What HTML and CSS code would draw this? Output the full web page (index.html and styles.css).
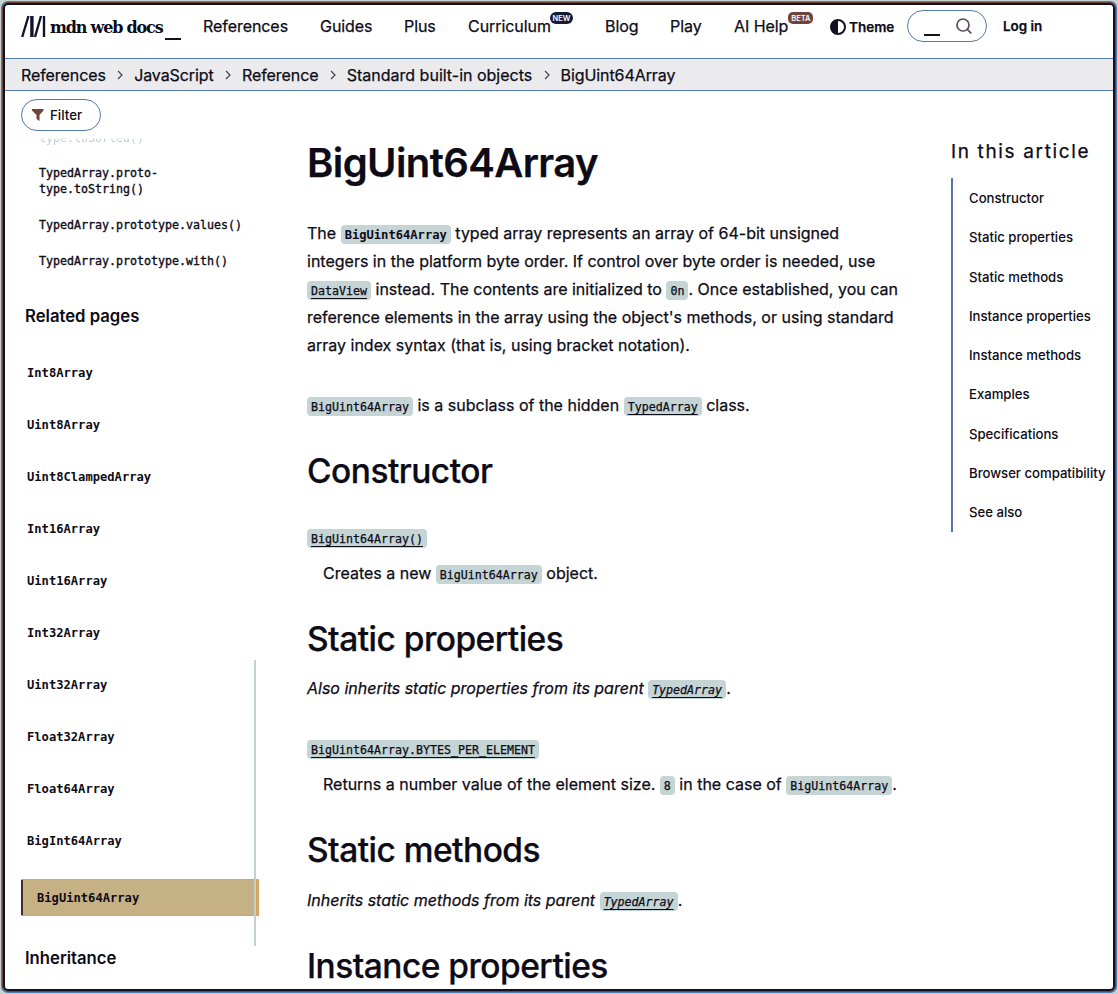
FILE: index.html
```html
<!DOCTYPE html>
<html lang="en">
<head>
<meta charset="utf-8">
<title>BigUint64Array - MDN Web Docs</title>
<link rel="stylesheet" href="styles.css">
</head>
<body>
<div class="window">
  <header class="top">
    <a class="brand"><svg class="mark" width="25" height="23" viewBox="0 0 25 23"><path d="M1.200 22 7.500 1M14 22 20 1M23 1v21" fill="none" stroke="#13152c" stroke-width="2.400"/><path d="M10.900 1v21" stroke="#13152c" stroke-width="3.400"/></svg><span class="name">mdn web docs</span><i class="cursor"></i></a>
    <nav class="menu">
      <a class="m1">References</a><a class="m2">Guides</a><a class="m3">Plus</a><a class="m4">Curriculum<sup class="badge">NEW</sup></a><a class="m5">Blog</a><a class="m6">Play</a><a class="m7">AI Help<sup class="badge beta">BETA</sup></a>
    </nav>
    <div class="theme"><svg width="16" height="16" viewBox="0 0 16 16"><circle cx="8" cy="8" r="7" fill="none" stroke="#13111f" stroke-width="2"/><path d="M8 1a7 7 0 0 0 0 14z" fill="#13111f"/></svg>Theme</div>
    <div class="search"><i class="cursor"></i><svg width="18" height="18" viewBox="0 0 18 18" fill="none" stroke="#5a4c5c" stroke-width="1.700"><circle cx="8" cy="8" r="6"/><path d="m12.300 12.300 4 4"/></svg></div>
    <a class="login">Log in</a>
  </header>
  <nav class="crumbs">
    <a>References</a><svg class="sep" viewBox="0 0 6 10"><path d="m1 1 4 4-4 4"/></svg><a>JavaScript</a><svg class="sep" viewBox="0 0 6 10"><path d="m1 1 4 4-4 4"/></svg><a>Reference</a><svg class="sep" viewBox="0 0 6 10"><path d="m1 1 4 4-4 4"/></svg><a class="wide">Standard built-in objects</a><svg class="sep" viewBox="0 0 6 10"><path d="m1 1 4 4-4 4"/></svg><a>BigUint64Array</a>
  </nav>
  <div class="page">
    <aside class="side">
      <div class="filter"><svg width="12" height="12" viewBox="0 0 12 12"><path d="M0 0h11.500v1.500L7.500 6v6L4.500 10V6L0 1.500z" fill="#6f443c"/></svg>Filter</div>
      <div class="faded">type.toSorted()</div>
      <ul class="methods">
        <li>TypedArray.proto-<br>type.toString()</li>
        <li>TypedArray.prototype.values()</li>
        <li>TypedArray.prototype.with()</li>
      </ul>
      <h3 class="group">Related pages</h3>
      <ul class="related">
        <li>Int8Array</li><li>Uint8Array</li><li>Uint8ClampedArray</li><li>Int16Array</li><li>Uint16Array</li><li>Int32Array</li><li>Uint32Array</li><li>Float32Array</li><li>Float64Array</li><li>BigInt64Array</li>
      </ul>
      <div class="current">BigUint64Array</div>
      <h3 class="group inherit">Inheritance</h3>
      <i class="scrollbar"></i>
    </aside>
    <main class="article">
      <h1>BigUint64Array</h1>
      <p class="intro">The <code class="strong">BigUint64Array</code> typed array represents an array of 64-bit unsigned<br>integers in the platform byte order. If control over byte order is needed, use<br><code class="link">DataView</code> instead. The contents are initialized to <code>0n</code>. Once established, you can<br>reference elements in the array using the object's methods, or using standard<br>array index syntax (that is, using bracket notation).</p>
      <p class="subclass"><code>BigUint64Array</code> is a subclass of the hidden <code class="link">TypedArray</code> class.</p>
      <h2>Constructor</h2>
      <dl><dt><code class="link">BigUint64Array()</code></dt><dd>Creates a new <code>BigUint64Array</code> object.</dd></dl>
      <h2>Static properties</h2>
      <p class="note"><em>Also inherits static properties from its parent <code class="link">TypedArray</code></em>.</p>
      <dl><dt><code class="link">BigUint64Array.BYTES_PER_ELEMENT</code></dt><dd>Returns a number value of the element size. <code>8</code> in the case of <code>BigUint64Array</code>.</dd></dl>
      <h2>Static methods</h2>
      <p class="note last"><em>Inherits static methods from its parent <code class="link">TypedArray</code></em>.</p>
      <h2>Instance properties</h2>
    </main>
    <aside class="toc">
      <h4>In this article</h4>
      <ul><li>Constructor</li><li>Static properties</li><li>Static methods</li><li>Instance properties</li><li>Instance methods</li><li>Examples</li><li>Specifications</li><li>Browser compatibility</li><li>See also</li></ul>
    </aside>
  </div>
</div>
</body>
</html>
```
FILE: styles.css
```css
* { box-sizing: border-box; margin: 0; padding: 0; }
html, body { height: 994px; overflow: hidden; }
body { background: #c4d4d3; padding: 3px; font-family: Inter, "Liberation Sans", sans-serif; font-size: 16px; color: #0d0b16; -webkit-text-stroke: .25px; }
ul { list-style: none; }
.window { width: 1112px; height: 988px; background: #fff; border: 2px solid #13111f; border-radius: 5px; outline: 1px solid #6f443c; box-shadow: 0 0 0 2px #5179ae; overflow: hidden; }
.top { height: 53px; display: flex; align-items: flex-start; }
.brand { display: flex; width: 198px; padding: 10px 0 0 16px; }
.mark { flex: none; }
.name { width: 114px; margin: 0 0 0 4px; font: bold 16px/26px "DejaVu Serif", serif; letter-spacing: -1.180px; white-space: nowrap; -webkit-text-stroke: 0; }
.cursor { display: block; width: 16px; height: 2px; background: #13111f; flex: none; }
.brand .cursor { margin: 23px 0 0 1px; }
.menu { display: flex; height: 43px; width: 626px; line-height: 43px; white-space: nowrap; letter-spacing: -.06px; }
.menu a { flex: none; }
.m1 { width: 117px; } .m2 { width: 84px; } .m3 { width: 64px; } .m4 { width: 137px; } .m5 { width: 65px; } .m6 { width: 64px; } .m7 { width: 95px; }
.badge { display: inline-block; vertical-align: top; margin: 7px 0 0 -1px; width: 23px; height: 12px; border-radius: 6px; background: #131a34; color: #fff; font-size: 7.500px; font-weight: 600; line-height: 13px; text-align: center; -webkit-text-stroke: 0; }
.beta { width: 25px; margin-left: 0; background: #6f443c; border-radius: 5px; }
.theme { width: 78px; height: 43px; padding-left: 1px; display: flex; align-items: center; gap: 3px; font-size: 13.500px; font-weight: 600; }
.search { width: 80px; height: 32px; margin-top: 5px; border: 1px solid #5179ae; border-radius: 16px; display: flex; padding: 6px 0 0 16px; }
.search .cursor { margin: 17px 15px 0 0; }
.login { margin-left: 16px; font-size: 13.400px; font-weight: 600; line-height: 43px; white-space: nowrap; }
.crumbs { height: 33px; background: #ebebed; border: solid #5179ae; border-width: 1px 0; display: flex; align-items: center; padding-left: 16px; letter-spacing: -.08px; }
.wide { letter-spacing: 0; }
.sep { width: 6px; height: 10px; margin: 0 11px 0 11.300px; fill: none; stroke: #444; stroke-width: 1.200; }
.page { display: flex; height: 898px; }
.side { width: 302px; flex: none; position: relative; padding: 8px 0 0 16px; font-family: "DejaVu Sans Mono", monospace; }
.filter { width: 80px; height: 32px; border: 1px solid #5179ae; border-radius: 16px; display: flex; align-items: center; gap: 6px; padding-left: 10px; font: 500 13.300px Inter, sans-serif; -webkit-text-stroke: 0; }
.faded { width: 120px; margin: -1px 0 4px 18px; font-size: 11.630px; line-height: 16px; background: linear-gradient(#fff0 50%, #bccccc 60%); -webkit-background-clip: text; background-clip: text; color: transparent; -webkit-text-stroke: 0; }
.methods { padding: 15px 0 0 18px; font-size: 11.630px; line-height: 16px; -webkit-text-stroke: .35px; }
.methods li { margin-bottom: 20px; white-space: nowrap; }
.group { font: 600 16.700px/24px Inter, sans-serif; margin: 35px 0 0 4px; -webkit-text-stroke: 0; }
.related { padding: 19px 0 0 6px; -webkit-text-stroke: 0; }
.related li { height: 52px; font-weight: bold; font-size: 12.130px; line-height: 52px; }
.current { width: 238px; height: 37px; margin-top: 12px; padding-left: 16px; border: solid #d7a561; border-width: 1px 3px 1px 0; box-shadow: inset 2px 0 #4a2b2b; background: #c5b183; font-weight: bold; font-size: 12.130px; line-height: 37px; -webkit-text-stroke: 0; }
.inherit { margin-top: 30px; }
.scrollbar { position: absolute; left: 249px; top: 569px; width: 2px; height: 286px; background: #c0d1d0; }
.article { width: 644px; flex: none; padding-top: 47px; white-space: nowrap; }
h1 { font-size: 40px; line-height: 50px; font-weight: 600; letter-spacing: -.6px; }
h2 { font-size: 33.500px; line-height: 40px; font-weight: 500; letter-spacing: -.52px; margin-top: 32px; }
p, dt, dd { height: 28px; line-height: 28px; }
.intro { height: 140px; margin-top: 31px; }
.subclass { margin-top: 32px; }
dl { margin-top: 32px; }
dd { margin: 8px 0 0 16px; }
.note { margin-top: 15px; }
.last { margin-top: 16px; }
code { font-family: "DejaVu Sans Mono", monospace; font-size: 11.630px; line-height: 1; background: #c5d4d4; border-radius: 4px; padding: 3px 4px 2px; }
.strong { font-weight: bold; font-size: 12.130px; -webkit-text-stroke: 0; }
.link { text-decoration: underline; text-underline-offset: 3px; }
.toc { padding: 48px 0 0; white-space: nowrap; }
.toc h4 { font-size: 19px; line-height: 26px; font-weight: 400; letter-spacing: 1.650px; }
.toc ul { margin-top: 13px; border-left: 2px solid #5179ae; padding-left: 16px; -webkit-text-stroke: 0; }
.toc li { height: 39.300px; line-height: 40px; font-size: 13.150px; font-weight: 500; }
```
